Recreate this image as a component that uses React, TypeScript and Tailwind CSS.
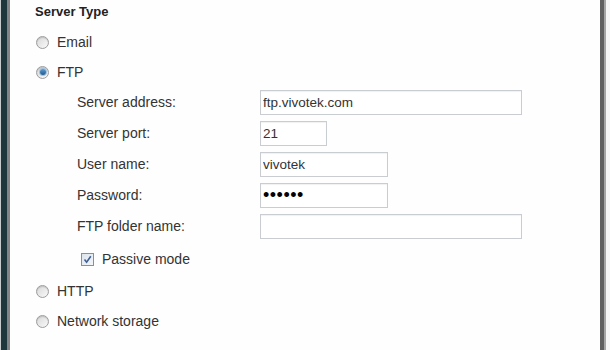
import { ReactNode } from "react";

const font = { fontFamily: '"Liberation Sans", Arial, sans-serif' };

function Radio({ checked }: { checked?: boolean }) {
  return (
    <span className="flex h-[13px] w-[13px] shrink-0 items-center justify-center rounded-full border border-[#9c9c9c] bg-gradient-to-br from-[#d8d8d8] to-[#fafafa] shadow-[inset_0_1px_1px_rgba(0,0,0,0.15)]">
      {checked && (
        <span className="h-[6px] w-[6px] rounded-full bg-gradient-to-b from-[#5d9bd1] to-[#1d5a8e] ring-1 ring-[#9fc2e0]" />
      )}
    </span>
  );
}

function RadioRow({ label, checked, h }: { label: string; checked?: boolean; h: string }) {
  return (
    <div className={`flex items-center gap-[8px] pl-[1px] ${h}`}>
      <Radio checked={checked} />
      <span className="text-[14px] text-[#333]">{label}</span>
    </div>
  );
}

function Field({ label, children }: { label: string; children: ReactNode }) {
  return (
    <div className="flex h-[31px] items-center">
      <span className="w-[225px] shrink-0 pl-[42px] text-[14px] text-[#333]">{label}</span>
      {children}
    </div>
  );
}

const inputCls =
  "h-[25px] border border-[#c9cdd1] bg-white px-[2px] text-[13.5px] text-[#333] outline-none shadow-[inset_0_1px_1px_rgba(0,0,0,0.06)]";

export default function App() {
  return (
    <div className="flex h-[350px] w-[610px] bg-[#fefefe]" style={font}>
      <div className="w-[1px] bg-[#c8cccc]" />
      <div className="w-[6px] bg-[#1f383b]" />
      <div className="w-[3px] bg-[#858585]" />

      <div className="flex flex-1 flex-col pl-[25px]">
        <div className="flex h-[27px] items-start pt-[2px] text-[13px] font-bold text-[#222]">Server Type</div>
        <RadioRow label="Email" h="h-[30px]" />
        <RadioRow label="FTP" checked h="h-[30px]" />

        <Field label="Server address:">
          <input readOnly value="ftp.vivotek.com" className={`${inputCls} w-[262px]`} />
        </Field>
        <Field label="Server port:">
          <input readOnly value="21" className={`${inputCls} w-[67px]`} />
        </Field>
        <Field label="User name:">
          <input readOnly value="vivotek" className={`${inputCls} w-[128px]`} />
        </Field>
        <Field label="Password:">
          <input
            readOnly
            type="password"
            value="123456"
            className="h-[25px] w-[128px] border border-[#c9cdd1] bg-white px-[2px] text-[18px] tracking-[0.5px] text-black outline-none shadow-[inset_0_1px_1px_rgba(0,0,0,0.06)]"
          />
        </Field>
        <Field label="FTP folder name:">
          <input readOnly value="" className={`${inputCls} w-[262px]`} />
        </Field>

        <div className="flex h-[34px] items-center gap-[8px] pl-[46px]">
          <span className="flex h-[13px] w-[13px] items-center justify-center border border-[#8e8f8f] bg-gradient-to-br from-[#dce4ec] to-[#f4f6f8]">
            <svg width="9" height="9" viewBox="0 0 9 9">
              <path d="M1.5 4.5 L3.6 7.2 L7.8 1.2" fill="none" stroke="#3f5f97" strokeWidth="1.6" />
            </svg>
          </span>
          <span className="text-[14px] text-[#333]">Passive mode</span>
        </div>

        <RadioRow label="HTTP" h="h-[30px]" />
        <RadioRow label="Network storage" h="h-[30px]" />
      </div>

      <div className="w-[4px] bg-[#5e5e5e]" />
      <div className="w-[2px] bg-[#a3a3a3]" />
      <div className="w-[4px] bg-[#f4f4f4]" />
    </div>
  );
}
